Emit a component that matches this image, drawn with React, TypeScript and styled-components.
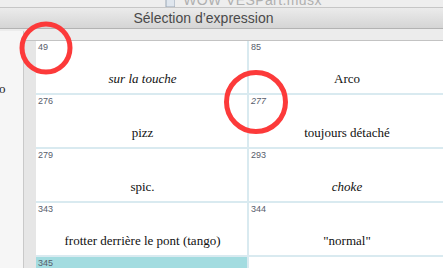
import styled, { createGlobalStyle } from 'styled-components';

const GlobalStyle = createGlobalStyle`
    html, body {
        margin: 0;
        padding: 0;
        width: 443px;
        height: 268px;
        overflow: hidden;
        background: #ececec;
    }
`;

const Window = styled.div`
    width: 443px;
    height: 268px;
    display: flex;
    flex-direction: column;
    overflow: hidden;
    position: relative;
    font-family: 'Liberation Sans', Arial, sans-serif;
`;

const BackStrip = styled.div`
    height: 7px;
    overflow: hidden;
    background: #eeeeee;
    border-bottom: 1px solid #c6c6c6;
    display: flex;
    justify-content: center;
    align-items: flex-start;
    gap: 8px;
    padding-left: 44px;
`;

const BackTitle = styled.span`
    margin-top: -7px;
    font-size: 14px;
    line-height: 15px;
    color: #b0b0b0;
    letter-spacing: 0.4px;
`;

const BackIcon = styled.svg`
    margin-top: -5px;
    flex: none;
`;

const TitleBar = styled.div`
    height: 20px;
    background: linear-gradient(#ebebeb, #d5d5d5);
    border-bottom: 1px solid #b3b3b3;
    display: flex;
    align-items: center;
    justify-content: center;
    font-size: 14px;
    color: #4a4a4a;
    padding-right: 36px;
`;

const Body = styled.div`
    flex: 1;
    display: flex;
    min-height: 0;
`;

const SidePanel = styled.div`
    width: 24px;
    flex: none;
    background: #f6f6f6;
    border-right: 1px solid #c9c9c9;
    margin-top: 2px;
    overflow: hidden;
    font-family: 'Liberation Serif', 'Times New Roman', serif;
    font-size: 13px;
    color: #222;
    padding-top: 50px;
    box-sizing: border-box;
`;

const SideText = styled.span`
    display: block;
    margin-left: -1px;
`;

const Main = styled.div`
    flex: 1;
    display: flex;
    flex-direction: column;
    min-width: 0;
`;

const TopGap = styled.div`
    height: 11px;
    flex: none;
    border-bottom: 1px solid #c3c3c3;
`;

const Content = styled.div`
    flex: 1;
    display: flex;
    min-height: 0;
`;

const Band = styled.div`
    width: 12px;
    flex: none;
    background: #e6e6e6;
`;

const Grid = styled.div`
    flex: 1;
    display: grid;
    grid-template-columns: 211px 1fr;
    grid-auto-rows: 52px;
    gap: 2px;
    background: #d9eaf0;
    align-content: start;
`;

const Cell = styled.div<{ $selected?: boolean }>`
    background: ${(p) => (p.$selected ? '#a3dce0' : '#ffffff')};
    display: flex;
    flex-direction: column;
    padding: 0 0 7px 2px;
    box-sizing: border-box;
`;

const Num = styled.span<{ $slant?: boolean }>`
    font-size: 9px;
    line-height: 11px;
    margin-top: 1px;
    color: #575c6b;
    font-style: ${(p) => (p.$slant ? 'italic' : 'normal')};
`;

const Label = styled.span<{ $italic?: boolean }>`
    margin-top: auto;
    text-align: center;
    font-family: 'Liberation Serif', 'Times New Roman', serif;
    font-size: 13px;
    line-height: 15px;
    color: #111;
    font-style: ${(p) => (p.$italic ? 'italic' : 'normal')};
`;

const Marks = styled.svg`
    position: absolute;
    left: 0;
    top: 0;
    pointer-events: none;
`;

type Item = { num: number; label?: string; italic?: boolean; slant?: boolean; selected?: boolean };

const items: Item[] = [
    { num: 49, label: 'sur la touche', italic: true },
    { num: 85, label: 'Arco' },
    { num: 276, label: 'pizz' },
    { num: 277, label: 'toujours détaché', slant: true },
    { num: 279, label: 'spic.' },
    { num: 293, label: 'choke', italic: true },
    { num: 343, label: 'frotter derrière le pont (tango)' },
    { num: 344, label: '"normal"' },
    { num: 345, selected: true },
];

export default function App() {
    return (
        <Window>
            <GlobalStyle />
            <BackStrip>
                <BackIcon width="10" height="12" viewBox="0 0 10 12">
                    <path d="M1 0h6l3 3v9H1z" fill="#dfe6ee" stroke="#9aa7b5" />
                </BackIcon>
                <BackTitle>WOW VESPart.musx</BackTitle>
            </BackStrip>
            <TitleBar>Sélection d’expression</TitleBar>
            <Body>
                <SidePanel>
                    <SideText>o</SideText>
                </SidePanel>
                <Main>
                    <TopGap />
                    <Content>
                        <Band />
                        <Grid>
                            {items.map((item) => (
                                <Cell key={item.num} $selected={item.selected}>
                                    <Num $slant={item.slant}>{item.num}</Num>
                                    {item.label && <Label $italic={item.italic}>{item.label}</Label>}
                                </Cell>
                            ))}
                            <Cell />
                        </Grid>
                    </Content>
                </Main>
            </Body>
            <Marks width="443" height="268">
                <circle cx="46" cy="48" r="24" fill="none" stroke="#fc3a3a" strokeWidth="5" />
                <circle cx="256" cy="102" r="29.5" fill="none" stroke="#fc3a3a" strokeWidth="5" />
            </Marks>
        </Window>
    );
}
